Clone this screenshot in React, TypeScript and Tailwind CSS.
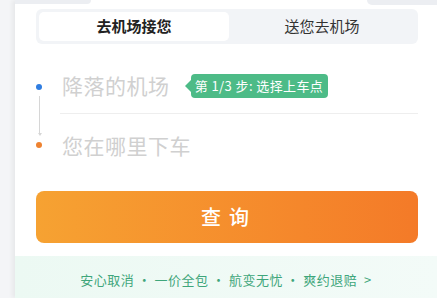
import React from 'react';

const FONT = '"Noto Sans CJK SC", "Noto Sans", sans-serif';

const App: React.FC = () => {
  return (
    <div
      className="relative h-[298px] w-[437px] overflow-hidden bg-[#f4f5f7]"
      style={{ fontFamily: FONT }}
    >
      {/* edges of the tab bar above, cut by the crop */}
      <div className="absolute left-[15px] top-0 z-10 h-[4px] w-[76px] rounded-br-[8px] bg-[#eceef2]" />
      <div className="absolute right-0 top-0 z-10 h-[5px] w-[70px] rounded-bl-[8px] bg-[#eceef2]" />

      <div className="ml-[15px] flex h-full flex-col bg-white shadow-[-3px_0_4px_rgba(0,0,0,0.05)]">
        <div className="pl-[21px] pr-[19px] pt-[9px]">
          {/* segmented tabs */}
          <div className="flex h-[35px] rounded-[6px] bg-[#f2f4f7] p-[3px]">
            <div className="flex w-[190px] items-center justify-center rounded-[5px] bg-white text-[15px] font-semibold text-[#222]">
              去机场接您
            </div>
            <div className="flex flex-1 items-center justify-center text-[15px] text-[#333]">
              送您去机场
            </div>
          </div>

          {/* address rows */}
          <div className="relative">
            <div className="absolute left-[2px] top-[52px] flex h-[40px] w-[3px] flex-col items-center">
              <div className="w-px flex-1 bg-[#d6d6d6]" />
              <div className="h-0 w-0 border-x-[2px] border-t-[3px] border-x-transparent border-t-[#d6d6d6]" />
            </div>

            <div className="flex h-[70px] items-stretch pt-[14px]">
              <div className="flex w-[6px] items-center">
                <div className="mt-[2px] h-[6px] w-[6px] rounded-full bg-[#2f7de1]" />
              </div>
              <div className="ml-[18px] flex flex-1 items-center border-b border-[#eeeeee] pl-[2px]">
                <span className="text-[21px] leading-none tracking-[0.5px] text-[#d0d0d0]">降落的机场</span>
                <div className="ml-[15px] flex items-center">
                  <div className="h-0 w-0 border-y-[6px] border-r-[6px] border-y-transparent border-r-[#4dbb87]" />
                  <div className="flex h-[24px] w-[137px] items-center justify-center rounded-[4px] bg-[#4dbb87] text-[13px] tracking-[0.4px] text-white">
                    第 1/3 步: 选择上车点
                  </div>
                </div>
              </div>
            </div>

            <div className="flex h-[62px] items-center">
              <div className="h-[6px] w-[6px] rounded-full bg-[#ee8230]" />
              <span className="ml-[20px] text-[21px] leading-none tracking-[0.5px] text-[#d0d0d0]">您在哪里下车</span>
            </div>
          </div>

          {/* search button */}
          <button className="mt-[15px] flex h-[52px] w-full items-center justify-center rounded-[8px] bg-gradient-to-r from-[#f6a232] to-[#f47a28] text-[20px] font-medium tracking-[8px] text-white">
            <span className="pl-[4px]">查询</span>
          </button>
        </div>

        {/* guarantee strip */}
        <div className="mt-[13px] flex-1 bg-gradient-to-r from-[#ecf9f3] to-[#f3fbf8] pt-[15px] text-center text-[13px] leading-[18px] tracking-[0.5px] text-[#3fa67b]">
          安心取消 · 一价全包 · 航变无忧 · 爽约退赔&nbsp; &gt;
        </div>
      </div>
    </div>
  );
};

export default App;
